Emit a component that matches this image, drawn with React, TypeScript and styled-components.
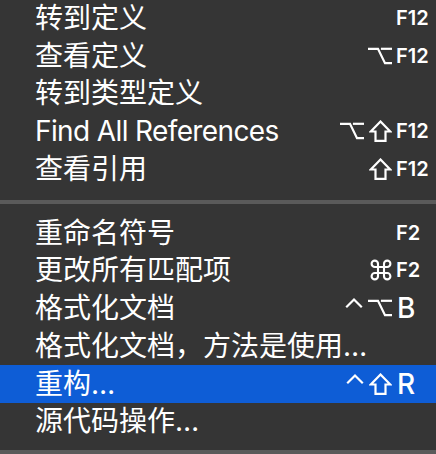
import styled, { createGlobalStyle } from 'styled-components';

const GlobalStyle = createGlobalStyle`
  html, body {
    margin: 0;
    padding: 0;
    background: #353535;
  }
`;

const Menu = styled.div`
  width: 436px;
  height: 454px;
  overflow: hidden;
  background: #353535;
  display: flex;
  flex-direction: column;
  font-family: Inter, "Noto Sans CJK SC", sans-serif;
  color: #f2f2f2;
`;

const Group = styled.div<{ $top?: number }>`
  display: flex;
  flex-direction: column;
  margin-top: ${(p) => p.$top ?? 0}px;
`;

const Separator = styled.div<{ $before: number; $after: number }>`
  flex: none;
  height: 4px;
  background: #5a5a5a;
  margin: ${(p) => p.$before}px 0 ${(p) => p.$after}px;
`;

const Item = styled.div<{ $active?: boolean }>`
  flex: none;
  height: 37.75px;
  display: flex;
  align-items: center;
  padding-left: 35px;
  background: ${(p) => (p.$active ? '#0e5dd6' : 'transparent')};
  color: #ffffff;
`;

const Label = styled.span<{ $latin?: boolean }>`
  flex: 1;
  font-size: 28px;
  line-height: 1;
  white-space: nowrap;
  letter-spacing: ${(p) => (p.$latin ? '-0.62px' : '0')};
`;

const Shortcut = styled.div`
  display: flex;
  align-items: center;
  height: 100%;
`;

const Mods = styled.div`
  display: flex;
  align-items: center;
  justify-content: flex-end;
  gap: 5px;
  margin-right: 4px;
`;

const Key = styled.span<{ $fn?: boolean }>`
  width: 40px;
  box-sizing: border-box;
  padding-left: ${(p) => (p.$fn ? 0 : 1)}px;
  font-family: Inter, "Liberation Sans", sans-serif;
  font-size: ${(p) => (p.$fn ? 20 : 28)}px;
  font-weight: ${(p) => (p.$fn ? 600 : 500)};
  line-height: 1;
`;

const Glyph = styled.svg`
  display: block;
  fill: none;
  stroke: currentColor;
  stroke-width: 2.2;
`;

const Option = () => (
  <Glyph width="24" height="18" viewBox="0 0 24 18" strokeLinecap="square" strokeLinejoin="miter">
    <path d="M1 1.8 H10 L17 16.2 H23" />
    <path d="M14 1.8 H23" />
  </Glyph>
);

const Shift = () => (
  <Glyph width="23" height="22" viewBox="0 0 23 22" strokeLinejoin="miter">
    <path d="M11.5 1.5 L1.8 11.5 H6.5 V20.8 H16.5 V11.5 H21.2 Z" />
  </Glyph>
);

const Command = () => (
  <Glyph width="22" height="22" viewBox="0 0 22 22" style={{ strokeWidth: 2.1 }}>
    <path d="M8 8 V4.8 A3.2 3.2 0 1 0 4.8 8 H17.2 A3.2 3.2 0 1 0 14 4.8 V17.2 A3.2 3.2 0 1 0 17.2 14 H4.8 A3.2 3.2 0 1 0 8 17.2 Z" />
  </Glyph>
);

const Control = () => (
  <Glyph width="18" height="22" viewBox="0 0 18 22" strokeLinecap="square" strokeLinejoin="miter">
    <path d="M2 9.5 L9 2.5 L16 9.5" />
  </Glyph>
);

type Mod = 'ctrl' | 'opt' | 'shift' | 'cmd';

interface Entry {
  label: string;
  mods?: Mod[];
  key?: string;
  fn?: boolean;
  active?: boolean;
}

const modIcon = (m: Mod, i: number) => {
  if (m === 'ctrl') return <Control key={i} />;
  if (m === 'opt') return <Option key={i} />;
  if (m === 'shift') return <Shift key={i} />;
  return <Command key={i} />;
};

const groupOne: Entry[] = [
  { label: '转到定义', key: 'F12', fn: true },
  { label: '查看定义', mods: ['opt'], key: 'F12', fn: true },
  { label: '转到类型定义' },
  { label: 'Find All References', mods: ['opt', 'shift'], key: 'F12', fn: true },
  { label: '查看引用', mods: ['shift'], key: 'F12', fn: true },
];

const groupTwo: Entry[] = [
  { label: '重命名符号', key: 'F2', fn: true },
  { label: '更改所有匹配项', mods: ['cmd'], key: 'F2', fn: true },
  { label: '格式化文档', mods: ['ctrl', 'opt'], key: 'B' },
  { label: '格式化文档，方法是使用…' },
  { label: '重构…', mods: ['ctrl', 'shift'], key: 'R', active: true },
  { label: '源代码操作…' },
];

const Row = ({ e }: { e: Entry }) => (
  <Item $active={e.active}>
    <Label $latin={/^[\x20-\x7e]+$/.test(e.label)}>{e.label}</Label>
    {e.key && (
      <Shortcut>
        <Mods>{(e.mods ?? []).map(modIcon)}</Mods>
        <Key $fn={e.fn}>{e.key}</Key>
      </Shortcut>
    )}
  </Item>
);

export default function App() {
  return (
    <>
      <GlobalStyle />
      <Menu>
        <Group $top={-1}>
          {groupOne.map((e) => (
            <Row key={e.label} e={e} />
          ))}
        </Group>
        <Separator $before={12} $after={10} />
        <Group>
          {groupTwo.map((e) => (
            <Row key={e.label} e={e} />
          ))}
        </Group>
        <Separator $before={10} $after={0} />
      </Menu>
    </>
  );
}
